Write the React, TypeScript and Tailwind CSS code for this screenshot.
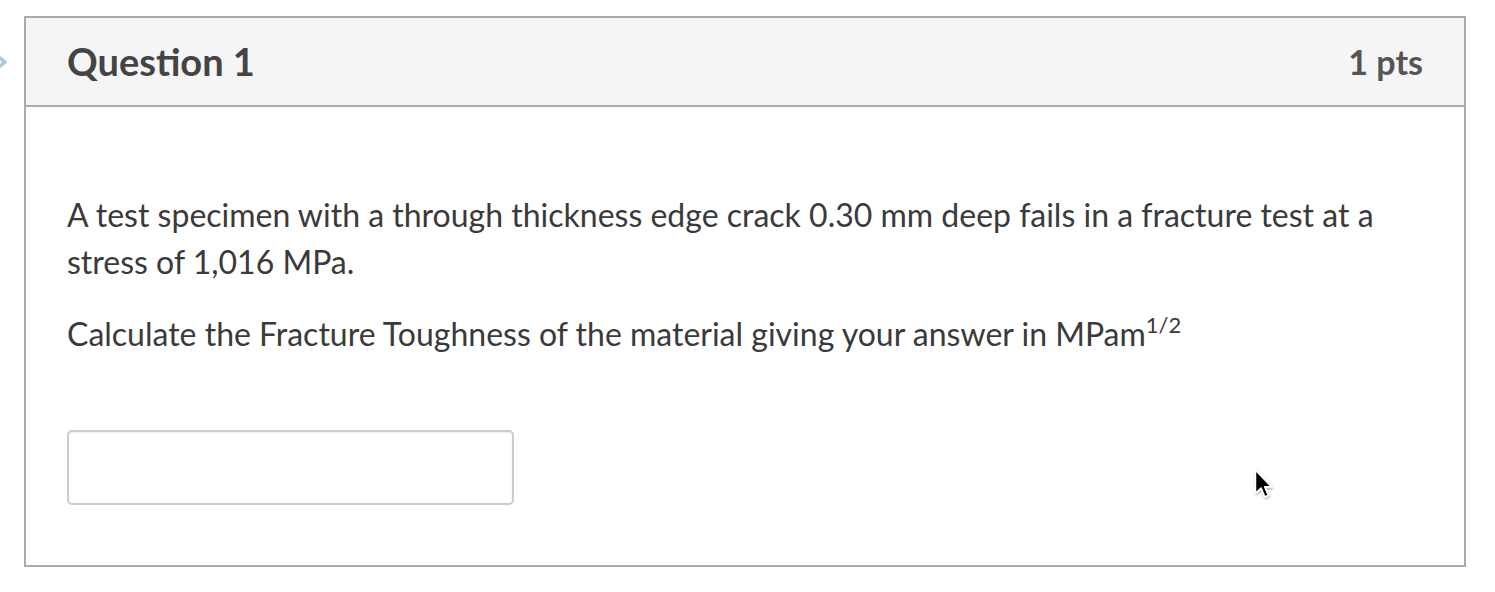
import React from "react";

function Chevron() {
  return (
    <svg className="absolute left-[-17px] top-[49px]" width="26" height="26" viewBox="0 0 26 26">
      <path d="M8 2 L22 13 L8 24" fill="none" stroke="#a8cbe4" strokeWidth="3.5" strokeLinejoin="round" />
    </svg>
  );
}

function Cursor() {
  return (
    <svg className="absolute left-[1250px] top-[466px]" width="29" height="39" viewBox="0 0 22 30">
      <defs>
        <filter id="sh" x="-30%" y="-30%" width="160%" height="160%">
          <feDropShadow dx="0.5" dy="1" stdDeviation="1" floodColor="#000" floodOpacity="0.35" />
        </filter>
      </defs>
      <path
        d="M4 3 L4 21 L8.3 17 L11.2 23.8 L14 22.6 L11.2 16 L16.5 16 Z"
        fill="#000"
        stroke="#fff"
        strokeWidth="1.3"
        strokeLinejoin="round"
        filter="url(#sh)"
      />
    </svg>
  );
}

export default function App() {
  return (
    <div className="relative min-h-[592px] bg-white pt-[16px] pl-[24px]" style={{ fontFamily: "Lato, 'Open Sans', sans-serif" }}>
      <Chevron />
      <div className="w-[1442px] border-2 border-[#aaaaaa]">
        <div className="flex h-[89px] items-center justify-between border-b-2 border-[#aaaaaa] bg-[#f5f5f5] px-[41px] pb-[1px]">
          <h2 className="text-[38px] font-bold text-[#444444]">Question 1</h2>
          <div className="text-[34px] font-bold text-[#555555]">1 pts</div>
        </div>
        <div className="px-[41px] pt-[84px] pb-[60px] text-[32px] leading-[47px] text-[#3a3a3a]">
          <p>
            A test specimen with a through thickness edge crack 0.30 mm deep fails in a fracture test at a stress of 1,016 MPa.
          </p>
          <p className="mt-[25px]">
            Calculate the Fracture Toughness of the material giving your answer in MPam
            <sup className="relative top-[-13px] text-[22px]">1/2</sup>
          </p>
          <div className="mt-[73px] h-[75px] w-[447px] rounded-[5px] border-2 border-[#cccccc] bg-white shadow-[inset_0_1px_2px_rgba(0,0,0,0.08)]" />
        </div>
      </div>
      <Cursor />
    </div>
  );
}
